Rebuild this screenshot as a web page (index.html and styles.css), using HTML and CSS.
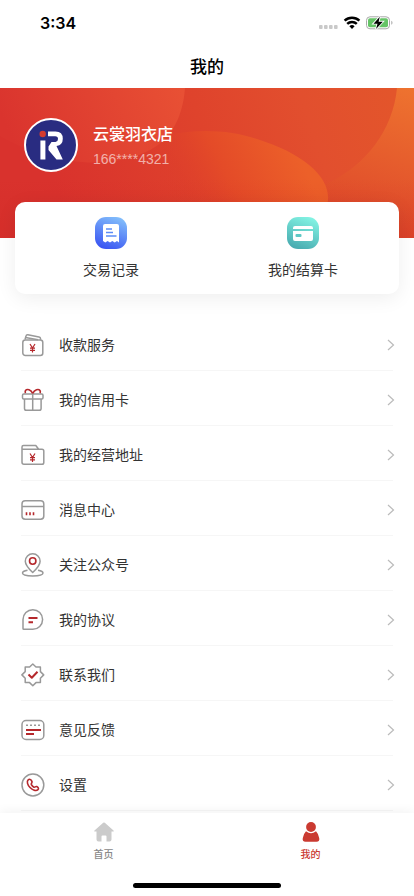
FILE: index.html
```html
<!DOCTYPE html>
<html lang="zh-CN">
<head>
<meta charset="utf-8">
<meta name="viewport" content="width=device-width, initial-scale=1">
<title>我的</title>
<link rel="stylesheet" href="styles.css">
</head>
<body>
<div class="page">
  <div class="status">
    <span class="time">3:34</span>
    <svg class="status-icons" width="76" height="16" viewBox="0 0 76 16" aria-hidden="true">
      <g fill="#c9c9c9"><rect x="1" y="10" width="3.600" height="4" rx="1"/><rect x="6" y="10" width="3.600" height="4" rx="1"/><rect x="11" y="10" width="3.600" height="4" rx="1"/><rect x="16" y="10" width="3.600" height="4" rx="1"/></g>
      <g fill="none" stroke="#000" stroke-width="2.500"><path d="M26.600 5.700a11 11 0 0 1 14.800 0"/><path d="M29.200 8.900a7 7 0 0 1 9.600 0"/></g>
      <path d="M34 14l-2.600-2.800a4 4 0 0 1 5.200 0z"/>
      <rect x="48.500" y="1.800" width="23" height="12" rx="3.500" fill="#fff" stroke="#a9a9a9"/>
      <rect x="50" y="3.300" width="20" height="9" rx="2" fill="#65c466"/>
      <path d="M73.300 5.700v4c1.600-.6 1.600-3.400 0-4z" fill="#a9a9a9"/>
      <path d="M61.800 1.800L55.500 8.700h4l-1.500 5.200 6.800-7.200h-4.200z" stroke="#fff" stroke-width="1.800" paint-order="stroke"/>
    </svg>
  </div>
  <header class="title"><h1>我的</h1></header>

  <section class="banner">
    <svg class="banner-art" viewBox="0 0 414 150" preserveAspectRatio="none" aria-hidden="true">
      <defs>
        <linearGradient id="base" x1="0" y1="1" x2="1" y2="0"><stop offset="0" stop-color="#d52d2c"/><stop offset=".5" stop-color="#df4a2b"/><stop offset="1" stop-color="#ee732f"/></linearGradient>
        <linearGradient id="disc" gradientUnits="userSpaceOnUse" x1="60" y1="110" x2="390" y2="0"><stop offset="0" stop-color="#d9322d"/><stop offset=".45" stop-color="#df432c"/><stop offset=".75" stop-color="#e24f2e"/><stop offset="1" stop-color="#e3552b"/></linearGradient>
        <linearGradient id="left" gradientUnits="userSpaceOnUse" x1="20" y1="70" x2="180" y2="0"><stop offset="0" stop-color="#da342e"/><stop offset="1" stop-color="#e85034"/></linearGradient>
        <linearGradient id="oval" gradientUnits="userSpaceOnUse" x1="170" y1="110" x2="290" y2="50"><stop offset="0" stop-color="#dc3a2b" stop-opacity="0"/><stop offset=".45" stop-color="#e44b28"/><stop offset="1" stop-color="#ec6029"/></linearGradient>
        <linearGradient id="shade" x1="0" y1="0" x2="0" y2="1"><stop offset=".6" stop-color="#c82020" stop-opacity="0"/><stop offset="1" stop-color="#c82020" stop-opacity=".2"/></linearGradient>
      </defs>
      <rect width="414" height="150" fill="url(#base)"/>
      <path d="M0 0H397C393 42 366 77 328 95C270 130 160 150 0 150z" fill="url(#disc)"/>
      <path d="M0 0H185C183 26 173 50 150 62C105 85 45 74 0 48z" fill="url(#left)"/>
      <path d="M130 62C165 40 220 38 257 51C302 65 330 88 328 112Q326 133 305 150H130z" fill="url(#oval)"/>
      <rect width="414" height="150" fill="url(#shade)"/>
    </svg>
    <div class="profile">
      <svg class="avatar" width="54" height="54" viewBox="0 0 54 54" role="img" aria-label="头像">
        <circle cx="27" cy="27" r="26" fill="#292c81" stroke="#fff" stroke-width="2"/>
        <circle cx="18.700" cy="16" r="3.200" fill="#d63b2e"/>
        <path d="M18.900 22.500V41.500" fill="none" stroke="#fff" stroke-width="5"/>
        <path d="M24 13.500h7.500q7.300 0 7.300 7.300 0 6.200-6.300 7.300L38.800 41.500H32.500L24.500 32v-3.500l3-4.600h4q2.500-.4 2.500-3t-2.800-2.700H24z" fill="#fff"/>
      </svg>
      <div>
        <h2 class="name">云裳羽衣店</h2>
        <p class="phone">166****4321</p>
      </div>
    </div>
  </section>

  <nav class="card" aria-label="快捷入口">
    <a href="#records">
      <svg width="32" height="32" viewBox="0 0 32 32" aria-hidden="true">
        <defs><linearGradient id="blue" x1=".7" y1="0" x2=".3" y2="1"><stop offset="0" stop-color="#82bdfb"/><stop offset="1" stop-color="#3a55f2"/></linearGradient></defs>
        <rect width="32" height="32" rx="11" fill="url(#blue)"/>
        <path d="M8 9q0-2 2-2h12q2 0 2 2v16.500l-2-1.500-2.300 1.500-2.400-1.500-2.300 1.500-2.400-1.500-2.300 1.500-2.300-1.500z" fill="#fff"/>
        <path d="M11 12h6M11 15.500h7M11 19h10.500" stroke="#5b8cf7" stroke-width="1.400"/>
      </svg>
      <span>交易记录</span>
    </a>
    <a href="#bankcard">
      <svg width="32" height="32" viewBox="0 0 32 32" aria-hidden="true">
        <defs><linearGradient id="teal" x1=".7" y1="0" x2=".3" y2="1"><stop offset="0" stop-color="#83f3e3"/><stop offset="1" stop-color="#48abb0"/></linearGradient></defs>
        <rect width="32" height="32" rx="11" fill="url(#teal)"/>
        <path d="M6 12v-1q0-2 2-2h16q2 0 2 2v1zM6 14h20v8q0 2-2 2H8q-2 0-2-2z" fill="#fff"/>
        <rect x="8.500" y="17" width="6" height="3" rx="1" fill="#5fc8c5"/>
      </svg>
      <span>我的结算卡</span>
    </a>
  </nav>

  <main>
    <ul class="menu">
      <li><a href="#collect">
        <svg class="icon" viewBox="0 0 24 24" aria-hidden="true"><rect x="1.800" y="7" width="20" height="15.500" rx="2.500"/><path d="M4 6.500l1-3.500q.3-1.500 1.800-1.300L18 4q1.500.3 1.500 1.500V6.800M4.500 4.500L17 6.800"/><path class="red thin" d="M9 11l2.500 4 2.500-4M11.500 15v4.500M9 15.200h5M9 17.300h5"/></svg>
        <span>收款服务</span><svg class="arrow" viewBox="0 0 8 12" aria-hidden="true"><path d="M1 1l5.500 5L1 11"/></svg></a></li>
      <li><a href="#credit">
        <svg class="icon" viewBox="0 0 24 24" aria-hidden="true"><rect x="1.500" y="6" width="20.500" height="5" rx="1.200"/><path d="M3.500 11v9.500q0 1.800 1.800 1.800h13q1.800 0 1.800-1.800V11M11.700 6v16"/><path class="red" d="M11.700 5.500C10 1.500 6 .7 4.500 2.500Q3.800 3.700 4.500 5.200M11.700 5.500C13.500 1.500 17.500.7 19 2.500q.7 1.200 0 2.700"/></svg>
        <span>我的信用卡</span><svg class="arrow" viewBox="0 0 8 12" aria-hidden="true"><path d="M1 1l5.500 5L1 11"/></svg></a></li>
      <li><a href="#address">
        <svg class="icon" viewBox="0 0 24 24" aria-hidden="true"><path d="M1 7V4q0-1.500 1.500-1.500h12.300L17.500 6M1 6.200h20q1.800 0 1.800 1.800v11.500q0 1.800-1.800 1.800H3q-2 0-2-2z"/><path class="red thin" d="M9 10.500l2.500 4 2.500-4M11.500 14.500V19M9 14.700h5M9 16.800h5"/></svg>
        <span>我的经营地址</span><svg class="arrow" viewBox="0 0 8 12" aria-hidden="true"><path d="M1 1l5.500 5L1 11"/></svg></a></li>
      <li><a href="#messages">
        <svg class="icon" viewBox="0 0 24 24" aria-hidden="true"><rect x="1" y="2.800" width="21.800" height="18.500" rx="3.200"/><path d="M1 8.500h21.800"/><path class="red" d="M5.500 14.300v3M9 14.300v3M12.500 14.300v3"/></svg>
        <span>消息中心</span><svg class="arrow" viewBox="0 0 8 12" aria-hidden="true"><path d="M1 1l5.500 5L1 11"/></svg></a></li>
      <li><a href="#follow">
        <svg class="icon" viewBox="0 0 24 24" aria-hidden="true"><path d="M11.700 19.500C7 15 4.300 12 4.300 8.200a7.400 7.400 0 0 1 14.800 0C19.100 12 16.500 15 11.700 19.500zM6.500 17.200C3 17.800 1.500 18.900 1.500 20c0 1.900 4.500 2.900 10.200 2.900S22 21.900 22 20c0-1.100-1.500-2.200-5-2.800"/><circle class="red" cx="11.700" cy="8" r="3.200"/></svg>
        <span>关注公众号</span><svg class="arrow" viewBox="0 0 8 12" aria-hidden="true"><path d="M1 1l5.500 5L1 11"/></svg></a></li>
      <li><a href="#agreement">
        <svg class="icon" viewBox="0 0 24 24" aria-hidden="true"><path d="M2 20.500V11.500A9.800 9.800 0 1 1 11.800 21.300H2.800q-.8 0-.8-.8z"/><path class="red thick" d="M7.500 10h9M7.500 14.300h4.500"/></svg>
        <span>我的协议</span><svg class="arrow" viewBox="0 0 8 12" aria-hidden="true"><path d="M1 1l5.500 5L1 11"/></svg></a></li>
      <li><a href="#contact">
        <svg class="icon" viewBox="0 0 24 24" aria-hidden="true"><path d="M11.800 1l3.200 3h4.400v4.600l3.300 3.300-3.300 3.300v4.400H15l-3.200 3.200-3.200-3.200H4.200v-4.400L.9 11.900l3.300-3.300V4h4.400z"/><path class="red thick" d="M7.500 11.500l3.300 3.200 5.700-6"/></svg>
        <span>联系我们</span><svg class="arrow" viewBox="0 0 8 12" aria-hidden="true"><path d="M1 1l5.500 5L1 11"/></svg></a></li>
      <li><a href="#feedback">
        <svg class="icon" viewBox="0 0 24 24" aria-hidden="true"><rect x="1" y="2.500" width="21.800" height="19" rx="4"/><path class="dots" d="M5 7.200h15"/><path class="red thick" d="M5 12h15M5 16h8"/></svg>
        <span>意见反馈</span><svg class="arrow" viewBox="0 0 8 12" aria-hidden="true"><path d="M1 1l5.500 5L1 11"/></svg></a></li>
      <li><a href="#settings">
        <svg class="icon" viewBox="0 0 24 24" aria-hidden="true"><circle cx="11.900" cy="12" r="10.900"/><path class="red" d="M7.200 6.800C5.500 8.500 6.500 12 9 14.500s6 4 8 2.200c1.200-1.100 0-2.500-1.300-3.100-1.100-.5-1.800 1.100-2.700.6-1-.6-2-1.600-2.700-2.700-.5-.9 1-1.500.7-2.700C10.600 7 8.700 5.500 7.200 6.800z"/></svg>
        <span>设置</span><svg class="arrow" viewBox="0 0 8 12" aria-hidden="true"><path d="M1 1l5.500 5L1 11"/></svg></a></li>
    </ul>
  </main>

  <footer class="tabbar">
    <nav class="tabs" aria-label="主导航">
      <a href="#home"><svg width="20" height="20" viewBox="0 0 20 20" aria-hidden="true"><path d="M9.200.8q.8-.7 1.600 0l8.700 7.800q.8 1-.5 1H17.500V17.500q0 2-2 2H12.500V14.500q0-1-1-1h-3q-1 0-1 1v5h-3q-2 0-2-2V9.600H1q-1.300 0-.5-1z" fill="#cbcbcb"/></svg><span>首页</span></a>
      <a class="active" href="#mine" aria-current="page"><svg width="20" height="20" viewBox="0 0 20 20" aria-hidden="true"><circle cx="10" cy="5" r="4.900" fill="#ca3a31"/><path d="M5 9.200Q10 13.500 15 9.200 17 11 18.200 16q.8 3.700-2.700 3.700h-11Q1 19.700 1.800 16 3 11 5 9.200z" fill="#ca3a31"/></svg><span>我的</span></a>
    </nav>
    <div class="home-bar"></div>
  </footer>
</div>
</body>
</html>
```
FILE: styles.css
```css
* { box-sizing: border-box; }

body {
  margin: 0;
  background: #fff;
  color: #333;
  font: 14px/20px "Liberation Sans", "Noto Sans CJK SC", sans-serif;
}

h1, h2, p, ul { margin: 0; padding: 0; }
a { color: inherit; text-decoration: none; }
svg { display: block; flex: none; }

.page {
  display: flex;
  flex-direction: column;
  min-height: 100vh;
}

.status {
  display: flex;
  align-items: center;
  justify-content: space-between;
  height: 44px;
  padding: 2px 20px 0 40px;
}
.time {
  color: #000;
  font: 600 16px/20px Inter, sans-serif;
}

.title {
  display: flex;
  align-items: center;
  justify-content: center;
  height: 44px;
  padding-top: 3px;
}
.title h1 {
  color: #000;
  font-size: 17px;
  font-weight: 500;
  line-height: 24px;
}

.banner {
  position: relative;
  height: 150px;
}
.banner-art {
  position: absolute;
  inset: 0;
  width: 100%;
  height: 100%;
}
.profile {
  position: relative;
  display: flex;
  align-items: center;
  gap: 15px;
  padding: 30px 24px;
}
.name {
  padding-top: 2px;
  color: #fff;
  font-size: 16px;
  font-weight: 500;
  line-height: 24px;
}
.phone {
  margin-top: 2px;
  color: rgba(255, 255, 255, .6);
  line-height: 20px;
}

.card {
  position: relative;
  display: flex;
  margin: -36px 15px 0;
  padding: 15px 0 14px;
  border-radius: 10px;
  background: #fff;
  box-shadow: 0 4px 20px rgba(0, 0, 0, .07);
}
.card a {
  display: flex;
  flex: 1;
  flex-direction: column;
  align-items: center;
  gap: 11px;
}

main { flex: 1; padding-top: 22px; }
.menu {
  padding: 0 21px;
  list-style: none;
}
.menu li { border-bottom: 1px solid #f6f6f6; }
.menu a {
  display: flex;
  align-items: center;
  gap: 14px;
  height: 54px;
  padding-top: 3px;
}
.menu span { flex: 1; }
.icon {
  width: 24px;
  height: 24px;
  fill: none;
  stroke: #999;
  stroke-width: 1.5;
  stroke-linejoin: round;
}
.icon .red { stroke: #b5282c; stroke-width: 1.6; }
.icon .thin { stroke-width: 1.2; }
.icon .thick { stroke-width: 2; }
.icon .dots { stroke-dasharray: 2 2; }
.arrow {
  width: 8px;
  height: 12px;
  margin-right: -2px;
  fill: none;
  stroke: #bbb;
  stroke-width: 1.2;
}

.tabbar {
  position: sticky;
  bottom: 0;
  padding: 9px 0 8px;
  background: #fff;
  box-shadow: 0 -2px 10px rgba(0, 0, 0, .05);
}
.tabs { display: flex; }
.tabs a {
  display: flex;
  flex: 1;
  flex-direction: column;
  align-items: center;
  gap: 5px;
  height: 61px;
  color: #888;
  font-size: 10px;
  font-weight: 500;
  line-height: 16px;
}
.tabs .active { color: #ca3a31; }
.home-bar {
  width: 148px;
  height: 5px;
  margin: 0 auto;
  border-radius: 3px;
  background: #000;
}
```
